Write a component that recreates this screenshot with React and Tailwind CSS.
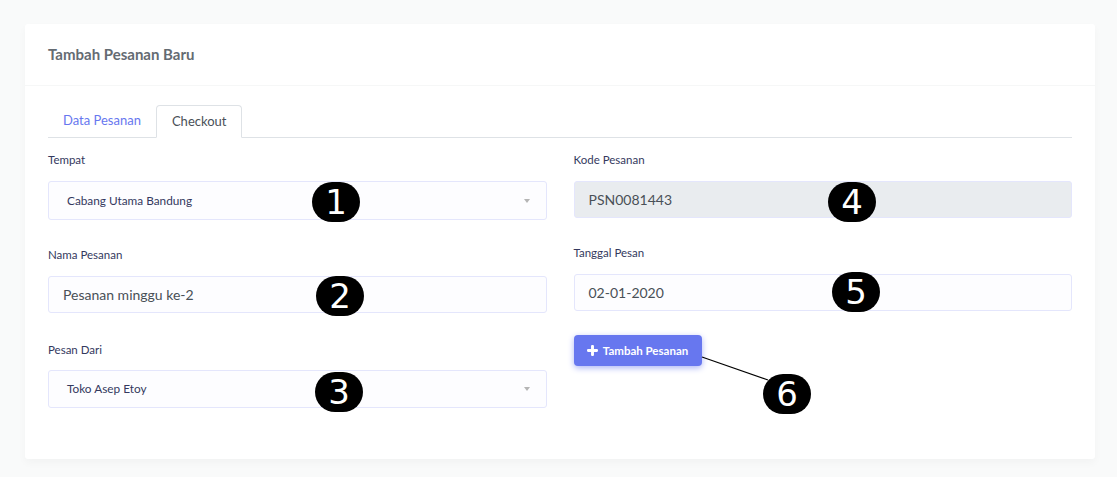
import React from "react";

const font = { fontFamily: "Lato, 'Noto Sans', sans-serif" };

const Marker = ({ n, className }) => (
    <div
        className={`absolute w-[48px] h-[40px] rounded-full bg-black text-white flex items-center justify-center text-[34px] leading-none ${className}`}
        style={{ fontFamily: "'DejaVu Sans', sans-serif" }}
    >
        {n}
    </div>
);

const Caret = () => (
    <span className="w-0 h-0 border-x-[3.5px] border-x-transparent border-t-[4px] border-t-[#b5b5b5]" />
);

const Label = ({ children }) => (
    <div className="h-4 leading-4 text-[11.5px] text-[#34395e]">{children}</div>
);

const SelectBox = ({ value, className }) => (
    <div className={`flex items-center justify-between border border-[#e4e6fc] bg-[#fdfdff] rounded-[3px] pl-[18px] pr-[16px] text-[11.8px] text-[#34395e] ${className}`}>
        <span>{value}</span>
        <Caret />
    </div>
);

const InputBox = ({ value, disabled }) => (
    <div className={`flex items-center h-[37px] mt-[13px] border border-[#e4e6fc] rounded-[3px] pl-[14px] text-[14px] text-[#495057] ${disabled ? "bg-[#e9ecef]" : "bg-[#fdfdff]"}`}>
        {value}
    </div>
);

const App = () => {
    return (
        <div className="relative h-[477px] bg-[#f9fafa] pt-[24px] pl-[25px] pr-[22px]" style={font}>
            <div className="bg-white rounded-[3px] h-[435px] shadow-[0_4px_8px_rgba(0,0,0,0.03)]">
                <div className="h-[62px] px-[23px] flex items-center border-b border-[#f6f7f7]">
                    <h4 className="text-[15px] font-bold text-[#646b72]">Tambah Pesanan Baru</h4>
                </div>
                <div className="px-[23px] pt-[19px]">
                    {/* tabs */}
                    <div className="flex h-[33px] border-b border-[#dee2e6] text-[13px]">
                        <div className="px-[15px] flex items-center text-[#6777ef]">Data Pesanan</div>
                        <div className="px-[15px] flex items-center text-[#495057] bg-white border border-[#dee2e6] border-b-white rounded-t-[4px] -mb-px">
                            Checkout
                        </div>
                    </div>

                    <div className="mt-[14px] grid grid-cols-2 gap-x-[27px]">
                        <div className="flex flex-col">
                            <Label>Tempat</Label>
                            <SelectBox value="Cabang Utama Bandung" className="mt-[13px] h-[39px]" />
                            <div className="mt-[27px]">
                                <Label>Nama Pesanan</Label>
                            </div>
                            <InputBox value="Pesanan minggu ke-2" />
                            <div className="mt-[29px]">
                                <Label>Pesan Dari</Label>
                            </div>
                            <SelectBox value="Toko Asep Etoy" className="mt-[12px] h-[38px]" />
                        </div>
                        <div className="flex flex-col">
                            <Label>Kode Pesanan</Label>
                            <InputBox value="PSN0081443" disabled />
                            <div className="mt-[27px]">
                                <Label>Tanggal Pesan</Label>
                            </div>
                            <InputBox value="02-01-2020" />
                            <div className="mt-[24px]">
                                <button className="h-[31px] w-[128px] rounded-[4px] bg-[#6777ef] text-white text-[11.5px] font-bold flex items-center justify-center gap-[5px] shadow-[0_2px_6px_#acb5f6]">
                                    <svg width="11" height="11" viewBox="0 0 12 12">
                                        <rect x="4.4" y="0" width="3.2" height="12" rx="1.2" fill="white" />
                                        <rect x="0" y="4.4" width="12" height="3.2" rx="1.2" fill="white" />
                                    </svg>
                                    Tambah Pesanan
                                </button>
                            </div>
                        </div>
                    </div>
                </div>
            </div>

            {/* annotations */}
            <svg className="absolute left-0 top-0 pointer-events-none" width="1117" height="477">
                <line x1="702" y1="357" x2="768" y2="380" stroke="black" strokeWidth="1.2" />
            </svg>
            <Marker n="1" className="left-[312px] top-[182px]" />
            <Marker n="2" className="left-[316px] top-[276px]" />
            <Marker n="3" className="left-[315px] top-[372px]" />
            <Marker n="4" className="left-[828px] top-[182px]" />
            <Marker n="5" className="left-[832px] top-[272px]" />
            <Marker n="6" className="left-[763px] top-[374px]" />
        </div>
    );
};

export default App;
